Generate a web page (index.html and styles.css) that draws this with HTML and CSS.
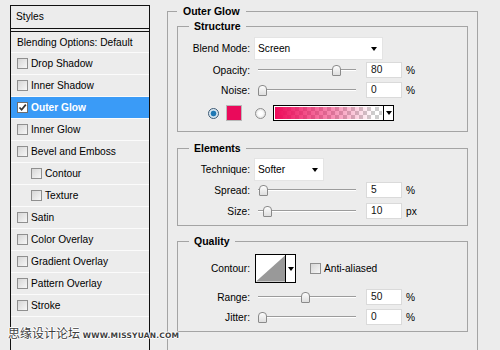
FILE: index.html
```html
<!DOCTYPE html>
<html lang="en">

<head>
  <meta charset="utf-8">
  <title>Layer Style</title>
  <link rel="stylesheet" href="styles.css">
</head>

<body>
  <div class="dialog">
    <div class="styles-panel">
      <div class="styles-head">Styles</div>
      <ul class="style-list">
        <li class="blend">Blending Options: Default</li>
        <li><span class="chk"></span>Drop Shadow</li>
        <li><span class="chk"></span>Inner Shadow</li>
        <li class="active">
          <span class="chk on">
            <svg width="9" height="9" viewBox="0 0 9 9"><path d="M1.5 4.5 L3.6 6.8 L7.8 1.6" fill="none" stroke="#333" stroke-width="1.7"/></svg>
          </span>Outer Glow
        </li>
        <li><span class="chk"></span>Inner Glow</li>
        <li><span class="chk"></span>Bevel and Emboss</li>
        <li class="sub"><span class="chk"></span>Contour</li>
        <li class="sub"><span class="chk"></span>Texture</li>
        <li><span class="chk"></span>Satin</li>
        <li><span class="chk"></span>Color Overlay</li>
        <li><span class="chk"></span>Gradient Overlay</li>
        <li><span class="chk"></span>Pattern Overlay</li>
        <li><span class="chk"></span>Stroke</li>
      </ul>
    </div>

    <fieldset class="group main">
      <legend>Outer Glow</legend>

      <!-- Structure -->
      <fieldset class="group inner structure">
        <legend>Structure</legend>
        <div class="row row-select mt6">
          <label>Blend Mode:</label>
          <div class="select select-wide">Screen<span class="arrow"></span></div>
        </div>
        <div class="row mt3">
          <label>Opacity:</label>
          <div class="slider"><span class="thumb" style="left: 74px"></span></div>
          <div class="num">80</div><span class="unit">%</span>
        </div>
        <div class="row mt4">
          <label>Noise:</label>
          <div class="slider"><span class="thumb" style="left: 0px"></span></div>
          <div class="num">0</div><span class="unit">%</span>
        </div>
        <div class="row color-row mt7">
          <span class="radio on"></span>
          <span class="swatch"></span>
          <span class="radio"></span>
          <div class="gradient">
            <span class="gradient-fill"></span>
            <span class="drop"><span class="arrow"></span></span>
          </div>
        </div>
      </fieldset>

      <!-- Elements -->
      <fieldset class="group inner elements">
        <legend>Elements</legend>
        <div class="row row-select mt5">
          <label>Technique:</label>
          <div class="select select-short">Softer<span class="arrow"></span></div>
        </div>
        <div class="row mt2">
          <label>Spread:</label>
          <div class="slider"><span class="thumb" style="left: 1px"></span></div>
          <div class="num">5</div><span class="unit">%</span>
        </div>
        <div class="row mt5">
          <label>Size:</label>
          <div class="slider"><span class="thumb" style="left: 5px"></span></div>
          <div class="num">10</div><span class="unit">px</span>
        </div>
      </fieldset>

      <!-- Quality -->
      <fieldset class="group inner quality">
        <legend>Quality</legend>
        <div class="row row-contour mt7">
          <label>Contour:</label>
          <div class="contour">
            <svg width="30" height="27" viewBox="0 0 30 27">
              <rect width="30" height="27" fill="#fff"/>
              <polygon points="0,27 30,0 30,27" fill="#999"/>
            </svg>
            <span class="drop"><span class="arrow"></span></span>
          </div>
          <span class="chk aa"></span>Anti-aliased
        </div>
        <div class="row mt6">
          <label>Range:</label>
          <div class="slider"><span class="thumb" style="left: 43px"></span></div>
          <div class="num">50</div><span class="unit">%</span>
        </div>
        <div class="row mt4">
          <label>Jitter:</label>
          <div class="slider"><span class="thumb" style="left: 0px"></span></div>
          <div class="num">0</div><span class="unit">%</span>
        </div>
      </fieldset>
    </fieldset>

    <div class="watermark">思缘设计论坛 <span class="url">WWW.MISSYUAN.COM</span></div>
  </div>
</body>

</html>
```

FILE: styles.css
```css
* {
  box-sizing: border-box;
}

html,
body {
  margin: 0;
  padding: 0;
}

body {
  width: 500px;
  height: 350px;
  overflow: hidden;
  background: #ececec;
  font-family: "Liberation Sans", Arial, sans-serif;
  font-size: 10.2px;
  color: #000;
}

.dialog {
  position: relative;
  display: flex;
  align-items: stretch;
  height: 350px;
  padding: 5px 0 0 10px;
}

/* left list */

.styles-panel {
  flex: none;
  width: 140px;
  border: 1px solid #111;
  border-bottom: none;
}

.styles-head {
  height: 23px;
  line-height: 22px;
  padding-left: 5px;
  border-bottom: 1px solid #111;
}

.style-list {
  list-style: none;
  margin: 2px 0 0;
  padding: 0;
  border-top: 1px solid #111;
}

.style-list li {
  display: flex;
  align-items: center;
  height: 22px;
  padding-left: 6px;
  border-bottom: 1px solid #fbfbfb;
}

.style-list li.blend {
  height: 21px;
}

.style-list li.sub {
  padding-left: 20px;
}

.style-list li.active {
  background: #3a9bf7;
  color: #fff;
  font-weight: bold;
}

.chk {
  flex: none;
  display: inline-flex;
  align-items: center;
  justify-content: center;
  width: 11px;
  height: 11px;
  margin-right: 3px;
  border: 1px solid #8f8f8f;
  background: linear-gradient(135deg, #d6d6d6, #f7f7f7);
}

.chk.on {
  background: #fff;
  border-color: #6e6e6e;
}

/* group boxes */

.group {
  margin: 0;
  padding: 0;
  min-width: 0;
  border: 1px solid #a4a4a4;
}

.group legend {
  padding: 0 6px;
  font-size: 10.5px;
  font-weight: bold;
  line-height: 12px;
}

.main {
  flex: none;
  width: 311px;
  margin-left: 17px;
  padding: 0 9px;
  border-bottom: none;
}

.inner legend {
  margin-left: 11px;
  padding: 0 5px;
}

.structure {
  margin-top: 3px;
  padding-bottom: 10px;
}

.elements {
  margin-top: 10px;
  padding-bottom: 6px;
}

.quality {
  margin-top: 9px;
  padding-bottom: 6px;
}

.mt2 { margin-top: 2px; }
.mt3 { margin-top: 3px; }
.mt4 { margin-top: 4px; }
.mt5 { margin-top: 5px; }
.mt6 { margin-top: 6px; }
.mt7 { margin-top: 7px; }

/* rows */

.row {
  display: flex;
  align-items: center;
  height: 16px;
}

.row label {
  flex: none;
  width: 72px;
  margin-right: 5px;
  text-align: right;
}

.row-select {
  height: 21px;
}

.row-contour {
  height: 29px;
}

.select {
  position: relative;
  height: 21px;
  line-height: 21px;
  padding-left: 3px;
  background: #fff;
  box-shadow: 0 0 0 1px #e4e4e4;
}

.select-wide {
  width: 127px;
}

.select-short {
  width: 68px;
}

.select .arrow {
  position: absolute;
  right: 5px;
  top: 9px;
}

.arrow {
  display: block;
  width: 0;
  height: 0;
  border-left: 3.5px solid transparent;
  border-right: 3.5px solid transparent;
  border-top: 4px solid #000;
}

.slider {
  position: relative;
  flex: none;
  width: 98px;
  height: 16px;
  margin-left: 3px;
}

.slider::before {
  content: "";
  position: absolute;
  left: 0;
  right: 0;
  top: 7px;
  height: 1px;
  background: #9c9c9c;
  box-shadow: 0 1px 0 #fff;
}

.thumb {
  position: absolute;
  top: 3px;
  width: 9px;
  height: 11px;
  border: 1px solid #8a8a8a;
  border-radius: 4px 4px 1px 1px;
  background: linear-gradient(#fdfdfd, #dedede);
}

.num {
  flex: none;
  width: 36px;
  height: 16px;
  margin-left: 10px;
  padding-left: 4px;
  line-height: 14px;
  background: #fff;
  border: 1px solid #dadada;
  color: #111;
}

.unit {
  margin-left: 4px;
}

/* colour row */

.color-row {
  padding-left: 30px;
}

.radio {
  flex: none;
  width: 11px;
  height: 11px;
  border-radius: 50%;
  border: 1px solid #8e8e8e;
  background: radial-gradient(circle, #fff 30%, #d2d2d2);
}

.radio.on {
  border-color: #3c5a74;
  background: radial-gradient(circle, #1f78b4 0 2.5px, #cfe2f0 3.2px, #f2f6f9);
}

.swatch {
  flex: none;
  width: 16px;
  height: 16px;
  margin: 0 13px 0 7px;
  background: #ea0a5b;
  border: 1px solid #b8b8b8;
}

.gradient {
  display: flex;
  width: 121px;
  height: 16px;
  margin-left: 7px;
  border: 1px solid #000;
  background: #fff;
}

.gradient-fill {
  flex: 1;
  margin: 1px;
  background:
    linear-gradient(to right, #ee0a5a, rgba(238, 10, 90, 0.45) 55%, rgba(238, 10, 90, 0) 92%),
    repeating-conic-gradient(#cdcdcd 0 25%, #fff 0 50%) 0 0 / 8px 8px;
}

.drop {
  display: flex;
  align-items: center;
  justify-content: center;
  flex: none;
  width: 10px;
  border-left: 1px solid #000;
  background: #fff;
}

/* contour */

.contour {
  display: flex;
  width: 41px;
  height: 29px;
  border: 1px solid #000;
  background: #fff;
}

.contour svg {
  display: block;
}

.chk.aa {
  margin-left: 14px;
}

/* watermark over the corner */

.watermark {
  position: absolute;
  left: 8px;
  top: 325px;
  font-family: "Noto Sans CJK SC", sans-serif;
  font-size: 12px;
  line-height: 16px;
  color: #3f3f3f;
  text-shadow: 1px 0 #fff, -1px 0 #fff, 0 1px #fff, 0 -1px #fff;
  white-space: nowrap;
}

.watermark .url {
  font-family: "DejaVu Sans", sans-serif;
  font-size: 7.5px;
  font-weight: bold;
  letter-spacing: 0.2px;
}
```
